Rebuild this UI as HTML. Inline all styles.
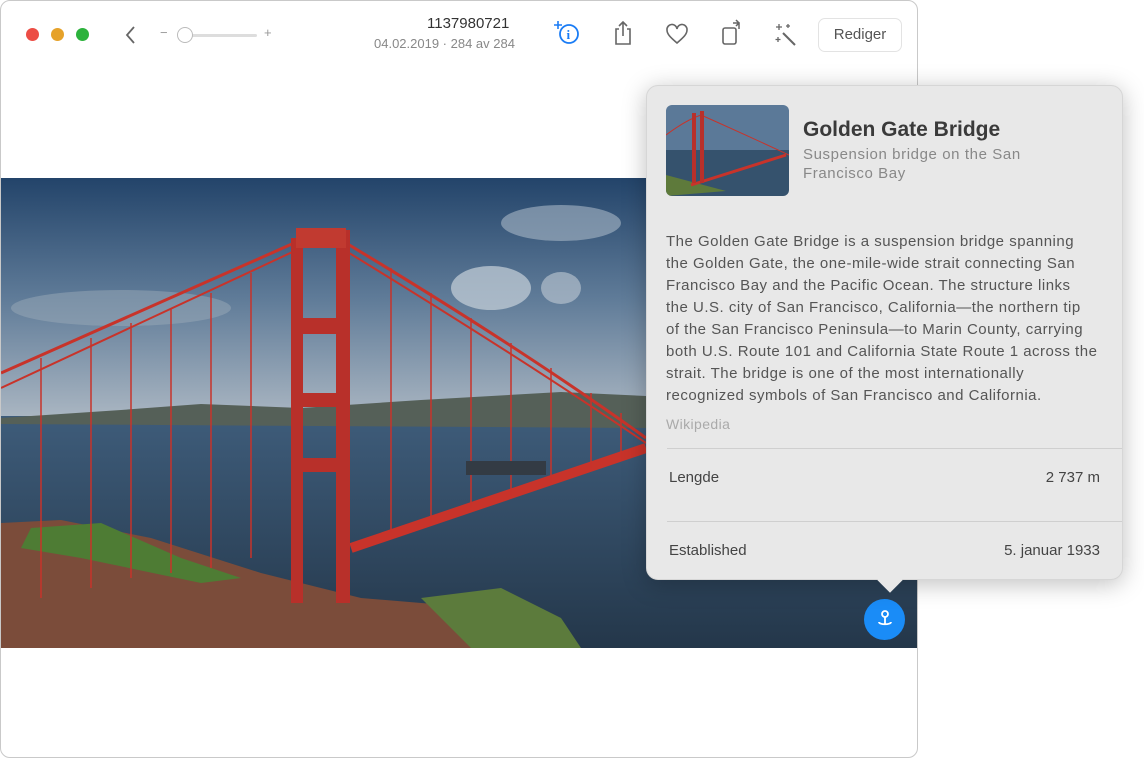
<!DOCTYPE html>
<html><head><meta charset="utf-8"><style>
*{margin:0;padding:0;box-sizing:border-box}
body{width:1144px;height:758px;background:#fff;font-family:"Liberation Sans",sans-serif;position:relative;overflow:hidden}
.win{position:absolute;left:0;top:0;width:918px;height:758px;border:1px solid #c9c9c9;border-radius:10px;background:#fff;overflow:hidden}
.dot{position:absolute;top:27px;width:13px;height:13px;border-radius:50%}
.t{position:absolute;color:#555;font-size:13px}
.pop{position:absolute;left:646px;top:85px;width:477px;height:495px;background:#e8e8e8;border-radius:12px;box-shadow:0 4px 24px rgba(0,0,0,.25);border:1px solid #d6d6d6}
.pop .p{position:absolute;color:#444}
.hr{position:absolute;left:20px;right:0;height:1px;background:#cfcfcf}
</style></head><body>
<div class="win">
<div class="dot" style="left:25px;background:#ec4d45"></div>
<div class="dot" style="left:50px;background:#e6a22a"></div>
<div class="dot" style="left:75px;background:#2cb23c"></div>
<svg style="position:absolute;left:122px;top:24px" width="14" height="20"><path d="M11 2 L4 10 L11 18" fill="none" stroke="#666" stroke-width="1.8"/></svg>
<div class="t" style="left:159px;top:24px;color:#999">−</div>
<div style="position:absolute;left:178px;top:33px;width:78px;height:3px;background:#ddd;border-radius:2px"></div>
<div style="position:absolute;left:176px;top:26px;width:16px;height:16px;border-radius:50%;background:#fff;border:1px solid #bbb"></div>
<div class="t" style="left:263px;top:24px;color:#999">+</div>
<div class="t" style="left:426px;top:14px;font-size:15px;color:#333">1137980721</div>
<div class="t" style="left:373px;top:35px;color:#888">04.02.2019 · 284 av 284</div>
<svg style="position:absolute;left:552px;top:18px" width="30" height="30"><circle cx="16" cy="15" r="9" fill="none" stroke="#1a7cf5" stroke-width="1.8"/><text x="13.5" y="20" font-size="13" fill="#1a7cf5" font-family="Liberation Serif" font-weight="bold">i</text><path d="M5 2v8M1 6h8" stroke="#1a7cf5" stroke-width="1.6"/></svg>
<svg style="position:absolute;left:610px;top:18px" width="24" height="28"><path d="M8 10H5v15h14V10h-3M12 3v14M8 7l4-4 4 4" fill="none" stroke="#666" stroke-width="1.6"/></svg>
<svg style="position:absolute;left:664px;top:22px" width="24" height="22"><path d="M12 20C5 14 2 11 2 7a5 5 0 0 1 10-1 5 5 0 0 1 10 1c0 4-3 7-10 13z" fill="none" stroke="#666" stroke-width="1.6"/></svg>
<svg style="position:absolute;left:718px;top:18px" width="26" height="28"><rect x="4" y="9" width="13" height="16" rx="2" fill="none" stroke="#666" stroke-width="1.6"/><path d="M14 4h6v6M17 1l3 3-3 3" fill="none" stroke="#666" stroke-width="1.5"/></svg>
<svg style="position:absolute;left:772px;top:20px" width="26" height="26"><path d="M10 12l12 12" stroke="#666" stroke-width="2"/><path d="M6 3v6M3 6h6M15 3v4M13 5h4M5 16v5M2.5 18.5h5" stroke="#666" stroke-width="1.3"/></svg>
<div style="position:absolute;left:817px;top:17px;width:84px;height:34px;border:1px solid #e3e3e3;border-radius:7px;font-size:15px;color:#555;text-align:center;line-height:32px">Rediger</div>
<svg style="position:absolute;left:0;top:177px" width="918" height="470" viewBox="0 0 918 470">
<defs><linearGradient id="sk" x1="0" y1="0" x2="0" y2="1"><stop offset="0" stop-color="#23446a"/><stop offset=".5" stop-color="#5f7b98"/><stop offset="1" stop-color="#aab6c2"/></linearGradient>
<linearGradient id="wa" x1="0" y1="0" x2="0" y2="1"><stop offset="0" stop-color="#3e5c7a"/><stop offset="1" stop-color="#24374a"/></linearGradient></defs>
<rect width="918" height="240" fill="url(#sk)"/>
<ellipse cx="490" cy="110" rx="40" ry="22" fill="#c8d2da" opacity=".7"/>
<ellipse cx="560" cy="45" rx="60" ry="18" fill="#a9b8c6" opacity=".6"/>
<ellipse cx="120" cy="130" rx="110" ry="18" fill="#9aaab8" opacity=".5"/>
<ellipse cx="560" cy="110" rx="20" ry="16" fill="#c2ccd5" opacity=".6"/>
<rect y="238" width="918" height="232" fill="url(#wa)"/>
<path d="M0 240 L120 232 L200 226 L300 230 L420 222 L560 214 L645 218 L645 250 L0 246Z" fill="#556058"/>
<path d="M0 345 L60 342 L150 360 L260 395 L360 420 L480 430 L560 470 L0 470Z" fill="#7b4c3a"/>
<path d="M30 350 L100 345 L180 380 L240 400 L200 405 L80 380 L20 370Z" fill="#4e7c34"/>
<path d="M420 420 L500 410 L560 440 L580 470 L470 470Z" fill="#5c7b3c"/>
<g stroke="#c8332a" fill="none">
<path d="M0 195 Q170 120 300 62" stroke-width="3"/>
<path d="M0 210 Q170 130 300 70" stroke-width="2"/>
<path d="M340 62 Q520 170 645 260" stroke-width="3"/>
<path d="M340 70 Q520 180 645 265" stroke-width="2"/>
<path d="M350 370 L645 270" stroke-width="10"/>
<g stroke-width="1.5"><path d="M40 180V420M90 160V410M130 145V400M170 130V395M210 115V390M250 95V380M390 90V355M430 115V345M470 140V330M510 165V318M550 190V305M590 215V290M620 235V280"/></g>
</g>
<rect x="290" y="60" width="12" height="365" fill="#b8302a"/>
<rect x="335" y="52" width="14" height="373" fill="#b8302a"/>
<rect x="295" y="50" width="50" height="20" fill="#c13a30"/>
<rect x="300" y="140" width="40" height="16" fill="#b8302a"/>
<rect x="300" y="215" width="40" height="14" fill="#b8302a"/>
<rect x="300" y="280" width="40" height="14" fill="#b8302a"/>
<rect x="465" y="283" width="80" height="14" fill="#333b44"/>
</svg>
<div style="position:absolute;left:863px;top:598px;width:41px;height:41px;border-radius:50%;background:#1a8cf7"></div>
<svg style="position:absolute;left:872px;top:606px" width="24" height="24"><circle cx="12" cy="7" r="3" fill="none" stroke="#fff" stroke-width="1.8"/><path d="M12 10v8M6 15c0 3 12 3 12 0" fill="none" stroke="#fff" stroke-width="1.8"/></svg>
</div>
<div class="pop">
<div style="position:absolute;left:234px;bottom:-10px;width:18px;height:18px;background:#e8e8e8;transform:rotate(45deg)"></div>
<svg style="position:absolute;left:19px;top:19px;border-radius:6px" width="123" height="91" viewBox="0 0 123 91"><rect width="123" height="50" fill="#5b7998"/><rect y="45" width="123" height="46" fill="#35526d"/><path d="M0 70 L60 86 L0 91Z" fill="#5e7a3b"/><path d="M25 80 L120 50" stroke="#c8332a" stroke-width="3"/><path d="M0 30 Q20 15 35 10 Q80 30 123 50" stroke="#c8332a" fill="none"/><rect x="26" y="8" width="4" height="70" fill="#b8302a"/><rect x="34" y="6" width="4" height="72" fill="#b8302a"/></svg>
<div class="p" style="left:156px;top:32px;font-size:21px;font-weight:bold;color:#3a3a3a">Golden Gate Bridge</div>
<div class="p" style="left:156px;top:59px;font-size:15px;color:#888;line-height:19px;letter-spacing:.6px">Suspension bridge on the San<br>Francisco Bay</div>
<div class="p" style="left:19px;top:145px;font-size:15px;line-height:22px;color:#555;white-space:nowrap;letter-spacing:.5px">The Golden Gate Bridge is a suspension bridge spanning<br>the Golden Gate, the one-mile-wide strait connecting San<br>Francisco Bay and the Pacific Ocean. The structure links<br>the U.S. city of San Francisco, California—the northern tip<br>of the San Francisco Peninsula—to Marin County, carrying<br>both U.S. Route 101 and California State Route 1 across the<br>strait. The bridge is one of the most internationally<br>recognized symbols of San Francisco and California.</div>
<div class="p" style="left:19px;top:330px;font-size:14px;color:#aaa;letter-spacing:.4px">Wikipedia</div>
<div class="hr" style="top:362px"></div>
<div class="p" style="left:22px;top:383px;font-size:15px">Lengde</div>
<div class="p" style="right:22px;top:383px;font-size:15px">2 737 m</div>
<div class="hr" style="top:435px"></div>
<div class="p" style="left:22px;top:456px;font-size:15px">Established</div>
<div class="p" style="right:22px;top:456px;font-size:15px">5. januar 1933</div>
</div>
</body></html>
